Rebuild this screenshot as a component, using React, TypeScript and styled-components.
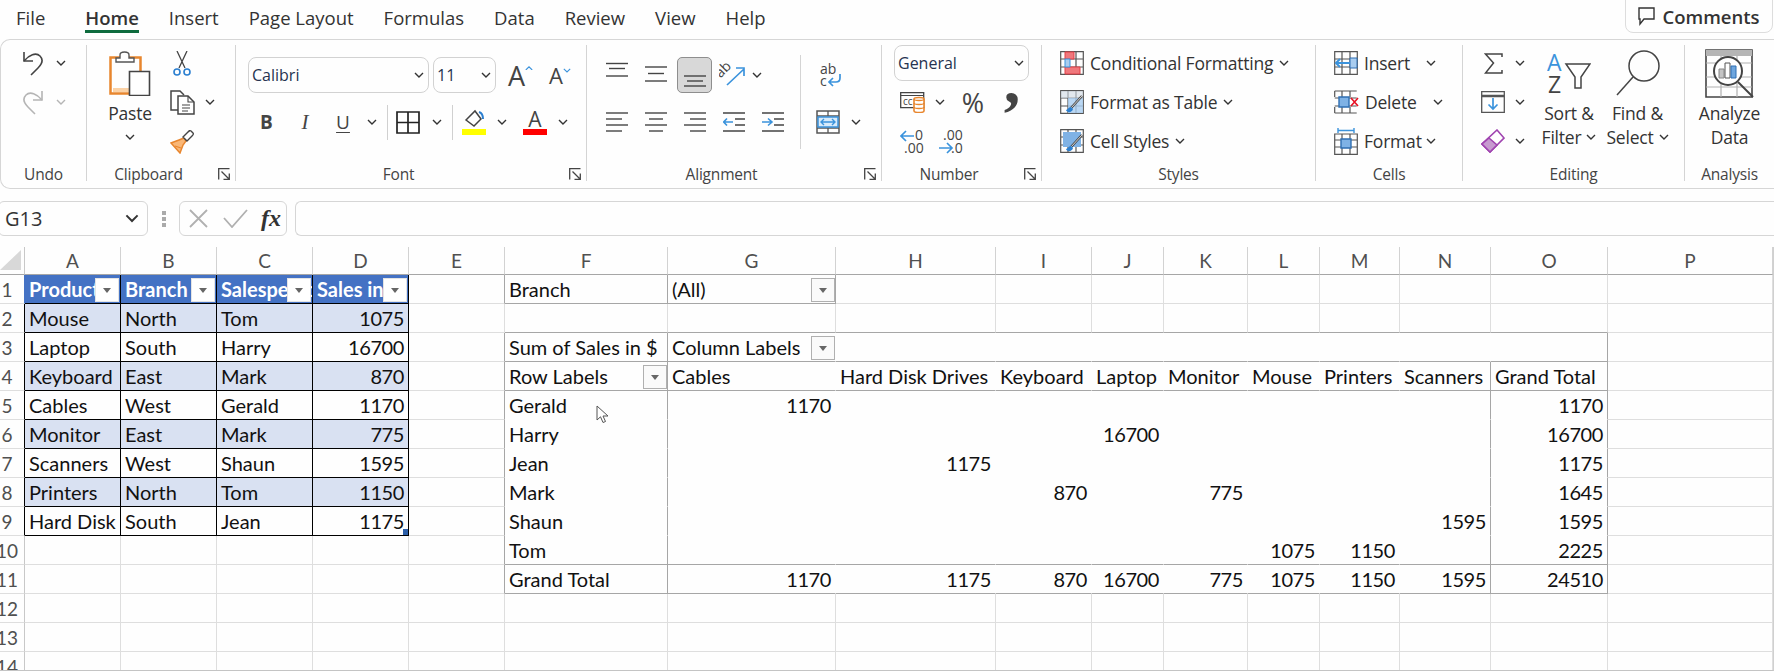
import React from "react";
import styled, { createGlobalStyle } from "styled-components";

const UI = `"Open Sans", "Noto Sans", sans-serif`;
const CELL = `Lato, "Open Sans", sans-serif`;
const INK = "#444";
const BLUE = "#3b93dc";
const ORANGE = "#e8862e";
const LINE = "#d6d6d6";
const GRID = "#dedede";
const GRAY = "#a6a6a6";

const GlobalStyle = createGlobalStyle`
  html, body { margin: 0; padding: 0; background: #fefefe; overflow: hidden; }
  * { box-sizing: border-box; }
`;

const Page = styled.div`
  width: 1774px;
  height: 671px;
  background: #fefefe;
  overflow: hidden;
  font-family: ${UI};
  color: #333;
`;

const TabBar = styled.div`
  display: flex;
  height: 39px;
  padding-left: 16px;
  gap: 30px;
  font-size: 18.5px;
`;

const Tab = styled.div<{ $active?: boolean; $after?: number }>`
  height: 33px;
  line-height: 36px;
  margin-right: ${(p) => p.$after ?? 0}px;
  color: #333;
  font-weight: ${(p) => (p.$active ? 600 : 400)};
  border-bottom: 3px solid ${(p) => (p.$active ? "#0e6b3e" : "transparent")};
`;

const CommentsButton = styled.div`
  margin-left: auto;
  margin-right: 1px;
  width: 148px;
  height: 34px;
  margin-top: -1px;
  display: flex;
  align-items: center;
  justify-content: center;
  gap: 7px;
  border: 1px solid #ddd;
  border-radius: 0 0 8px 8px;
  font-size: 18.5px;
  font-weight: 600;
`;

const Ribbon = styled.div`
  display: flex;
  height: 150px;
  border: 1px solid ${LINE};
  border-right: none;
  border-width: 1.5px 0 1.5px 1.5px;
  border-radius: 10px 0 0 10px;
`;

const Group = styled.section<{ $w: number; $last?: boolean }>`
  width: ${(p) => p.$w}px;
  flex: none;
  margin: 5px 0 7px;
  display: flex;
  flex-direction: column;
  border-right: ${(p) => (p.$last ? "none" : "1px solid #d4d4d4")};
`;

const Body = styled.div`
  flex: 1;
  display: flex;
  min-height: 0;
`;

const Foot = styled.div`
  height: 14px;
  display: flex;
  align-items: center;
  font-size: 15.5px;
  letter-spacing: -0.2px;
  color: #444;
`;

const FootLabel = styled.div<{ $launcher?: boolean }>`
  flex: 1;
  text-align: center;
  padding-right: ${(p) => (p.$launcher ? 8 : 0)}px;
`;

const Launcher = styled.svg`
  width: 12px;
  height: 12px;
  margin-right: 5px;
  flex: none;
`;

const Stack = styled.div<{ $top?: number; $gap?: number; $w?: number; $ml?: number }>`
  display: flex;
  flex-direction: column;
  padding-top: ${(p) => p.$top ?? 0}px;
  gap: ${(p) => p.$gap ?? 3}px;
  margin-left: ${(p) => p.$ml ?? 0}px;
  ${(p) => (p.$w ? `width: ${p.$w}px; flex: none;` : "")}
`;

const Row = styled.div<{ $pl?: number }>`
  display: flex;
  align-items: center;
  height: 36px;
  padding-left: ${(p) => p.$pl ?? 0}px;
`;

const Slot = styled.div<{ $w: number }>`
  width: ${(p) => p.$w}px;
  flex: none;
  height: 100%;
  display: flex;
  align-items: center;
  justify-content: center;
  & > * { flex: none; }
`;

const SelectedSlot = styled(Slot)`
  margin-left: 1px;
  background: #d8d8d8;
  border: 1px solid #8e8e8e;
  border-radius: 5px;
`;

const RowDivider = styled.div`
  width: 1px;
  height: 35px;
  background: #d0d0d0;
`;

const BodyDivider = styled.div`
  width: 1px;
  height: 94px;
  margin-top: 10px;
  background: #d4d4d4;
  flex: none;
`;

const Combo = styled.div<{ $w: number; $ml?: number }>`
  width: ${(p) => p.$w}px;
  height: 36px;
  margin-left: ${(p) => p.$ml ?? 0}px;
  flex: none;
  display: flex;
  align-items: center;
  justify-content: space-between;
  padding: 0 4px 0 3px;
  border: 1px solid #d2d2d2;
  border-radius: 8px;
  font-size: 16px;
  color: #263350;
`;

const RowText = styled.span<{ $w?: number }>`
  font-size: 17.5px;
  letter-spacing: -0.2px;
  white-space: nowrap;
  color: #333;
  ${(p) => (p.$w ? `width: ${p.$w}px; flex: none;` : "")}
`;

const IconGap = styled.div`
  width: 6px;
  flex: none;
`;

const ChevGap = styled.div`
  width: 6px;
  flex: none;
`;

const BigColumn = styled.div<{ $w: number; $ml?: number }>`
  width: ${(p) => p.$w}px;
  margin-left: ${(p) => p.$ml ?? 0}px;
  flex: none;
  display: flex;
  flex-direction: column;
  align-items: center;
`;

const BigIcon = styled.div`
  height: 56px;
  display: flex;
  align-items: center;
  justify-content: center;
`;

const BigText = styled.div`
  display: flex;
  align-items: center;
  gap: 5px;
  height: 24px;
  font-size: 17.5px;
  letter-spacing: -0.2px;
  color: #333;
  white-space: nowrap;
`;

const LetterBig = styled.span<{ $size: number }>`
  font-size: ${(p) => p.$size}px;
  line-height: 1;
  color: ${INK};
`;

const GrowWrap = styled.div`
  display: flex;
  align-items: flex-start;
  & > svg { margin-top: 4px; }
`;

const StyleLetter = styled.span<{ $bold?: boolean; $italic?: boolean; $underline?: boolean }>`
  font-family: ${(p) => (p.$italic ? `"Liberation Serif", serif` : UI)};
  font-size: ${(p) => (p.$italic ? 21 : 19)}px;
  font-weight: ${(p) => (p.$bold ? 700 : 400)};
  font-style: ${(p) => (p.$italic ? "italic" : "normal")};
  text-decoration: ${(p) => (p.$underline ? "underline" : "none")};
  text-underline-offset: 3px;
  color: ${INK};
`;

const ColorLetter = styled.div`
  display: flex;
  flex-direction: column;
  align-items: center;
  font-size: 21px;
  line-height: 19px;
  color: ${INK};
`;

const ColorBar = styled.div<{ $c: string }>`
  width: 24px;
  height: 6px;
  background: ${(p) => p.$c};
`;

const Percent = styled.span`
  font-size: 27px;
  line-height: 1;
  color: ${INK};
`;

const CommaMark = styled.span`
  font-family: "Liberation Serif", serif;
  font-weight: 700;
  font-size: 66px;
  line-height: 0;
  color: ${INK};
  transform: translateY(-21px);
`;

const FormulaBar = styled.div`
  display: flex;
  align-items: center;
  height: 35px;
  margin-top: 12px;
`;

const NameBox = styled.div`
  width: 150px;
  height: 35px;
  margin-left: -2px;
  padding: 0 8px 0 6px;
  display: flex;
  align-items: center;
  justify-content: space-between;
  border: 1px solid ${LINE};
  border-radius: 6px;
  font-size: 20px;
  color: #333;
`;

const Grip = styled.svg`
  width: 4px;
  height: 16px;
  margin: 0 13px 0 14px;
  flex: none;
`;

const FormulaButtons = styled.div`
  width: 108px;
  height: 35px;
  flex: none;
  padding-left: 9px;
  display: flex;
  align-items: center;
  gap: 15px;
  border: 1px solid ${LINE};
  border-radius: 6px;
`;

const FxMark = styled.span`
  font-family: "Liberation Serif", serif;
  font-style: italic;
  font-weight: 700;
  font-size: 24px;
  margin-left: -2px;
  color: #333;
`;

const FormulaInput = styled.div`
  flex: 1;
  height: 35px;
  margin-left: 8px;
  border: 1px solid ${LINE};
  border-right: none;
  border-radius: 6px 0 0 6px;
`;

const Sheet = styled.div`
  position: relative;
  height: 424px;
  margin-top: 11px;
  overflow: hidden;
  border-bottom: 1px solid #c4c4c4;
  border-right: 1px solid #d0d0d0;
`;

const SheetGrid = styled.div`
  display: grid;
  grid-template-columns: 25px 96px 96px 96px 96px 96px 163px 168px 160px 96px 72px 84px 72px 80px 91px 117px 1fr;
  grid-template-rows: 28px repeat(14, 29px);
  font-family: ${CELL};
  font-size: 20px;
  color: #111;
`;

const CornerCell = styled.div`
  display: flex;
  align-items: center;
  border-right: 1px solid #c8c8c8;
  border-bottom: 1px solid ${GRAY};
`;

const ColumnHead = styled.div`
  display: flex;
  align-items: center;
  justify-content: center;
  font-size: 19px;
  color: #505050;
  border-right: 1px solid #d2d2d2;
  border-bottom: 1px solid ${GRAY};
`;

const RowHead = styled.div<{ $edge: string }>`
  display: flex;
  align-items: center;
  justify-content: center;
  padding-right: 10px;
  overflow: hidden;
  font-size: 19px;
  color: #505050;
  border-right: 1px solid ${(p) => p.$edge};
  border-bottom: 1px solid ${GRID};
`;

const Cell = styled.div<{
  $right: string;
  $bottom: string;
  $num?: boolean;
  $bg?: string;
  $head?: boolean;
}>`
  position: relative;
  display: flex;
  align-items: center;
  justify-content: ${(p) => (p.$num ? "flex-end" : "flex-start")};
  padding: 0 4px;
  overflow: hidden;
  white-space: nowrap;
  letter-spacing: ${(p) => (p.$num ? "-0.4px" : "0")};
  background: ${(p) => p.$bg ?? "transparent"};
  color: ${(p) => (p.$head ? "#fff" : "#111")};
  font-weight: ${(p) => (p.$head ? 700 : 400)};
  border-right: 1px solid ${(p) => p.$right};
  border-bottom: 1px solid ${(p) => p.$bottom};
`;

const FilterButton = styled.div<{ $pivot?: boolean }>`
  position: absolute;
  right: ${(p) => (p.$pivot ? 0 : 1)}px;
  top: 3px;
  width: 24px;
  height: 24px;
  display: flex;
  align-items: center;
  justify-content: center;
  background: ${(p) => (p.$pivot ? "#fafafa" : "#fff")};
  border: 1px solid ${(p) => (p.$pivot ? "#b0b0b0" : "#e4e4e4")};
  &::after {
    content: "";
    border-left: 4.5px solid transparent;
    border-right: 4.5px solid transparent;
    border-top: 5px solid #666;
  }
`;

const ResizeCorner = styled.div`
  position: absolute;
  right: 0;
  bottom: 0;
  width: 5px;
  height: 6px;
  background: #2b5ea8;
`;

const MouseCursor = styled.svg`
  position: absolute;
  left: 596px;
  top: 158px;
  width: 13px;
  height: 19px;
`;

/* ---- icons ---- */

const Chev = ({ w = 10, gray = false, color, up = false }: { w?: number; gray?: boolean; color?: string; up?: boolean }) => (
  <svg width={w} height={w * 0.6} viewBox="0 0 10 6" fill="none">
    <path d={up ? "M1 5l4-4 4 4" : "M1 1l4 4 4-4"} stroke={color ?? (gray ? "#b5b5b5" : "#333")} strokeWidth="1.4" />
  </svg>
);

const UndoIcon = ({ flip = false, color = INK }: { flip?: boolean; color?: string }) => (
  <svg width="24" height="26" viewBox="0 0 24 26" fill="none" stroke={color} strokeWidth="1.6" transform={flip ? "scale(-1 1)" : undefined}>
    <path d="M3 2v9h9" />
    <path d="M3 11C8 5 15 2 19 6c4 4 1 9-2 12l-7 7" />
  </svg>
);

const PasteIcon = () => (
  <svg width="42" height="46" viewBox="0 0 42 46" fill="none">
    <path d="M1.500 7.500h30v36h-30z" stroke={ORANGE} strokeWidth="2.500" />
    <path d="M4 38h16v4H4z" fill="#fbd2a6" />
    <path d="M7 12V8h4V5c0-4 9-4 9 0v3h5v4z" fill="#fff" stroke="#555" strokeWidth="1.400" />
    <path d="M20.500 21.500h20v24h-20z" fill="#fff" stroke={INK} strokeWidth="1.600" />
  </svg>
);

const CutIcon = () => (
  <svg width="18" height="25" viewBox="0 0 18 25" fill="none">
    <path d="M4 0l8 17M14 0L6 17" stroke={INK} strokeWidth="1.300" />
    <circle cx="4" cy="21" r="3" stroke="#2b7fd0" strokeWidth="1.600" />
    <circle cx="14" cy="21" r="3" stroke="#2b7fd0" strokeWidth="1.600" />
  </svg>
);

const CopyIcon = () => (
  <svg width="25" height="25" viewBox="0 0 25 25" fill="none" stroke={INK} strokeWidth="1.500">
    <path d="M8 20H1V1h9l4 4" />
    <path d="M8 6h10l6 6v12H8z" fill="#fff" />
    <path d="M18 6v6h6M12 15h8M12 18h8M12 21h6" strokeWidth="1.100" />
  </svg>
);

const PainterIcon = () => (
  <svg width="25" height="25" viewBox="0 0 25 25" fill="none">
    <path d="M14 9l-5 2-8 3 9 10 3-8 3-4z" fill="#f9b777" stroke={ORANGE} strokeWidth="1.500" />
    <path d="M5 17l6 2" stroke={ORANGE} strokeWidth="1.200" />
    <path d="M13 8l5-5c1-1 2-2 3-1l2 2c1 1 0 2-1 3l-5 5z" fill="#fff" stroke={INK} strokeWidth="1.400" />
  </svg>
);

const LauncherIcon = () => (
  <Launcher viewBox="0 0 12 12" fill="none" stroke={INK} strokeWidth="1.300">
    <path d="M.7 11.500V.7h10.800" />
    <path d="M3.500 3.500l7.500 7.500M11.300 5.500v6H5.500" />
  </Launcher>
);

const BordersIcon = () => (
  <svg width="24" height="23" viewBox="0 0 24 23" fill="none" stroke="#222" strokeWidth="1.700">
    <path d="M1 1h22v21H1zM12 1v21M1 11.500h22" />
  </svg>
);

const FillIcon = () => (
  <svg width="24" height="26" viewBox="0 0 24 26" fill="none">
    <path d="M4 11l9-9 6 8-7 7z" stroke={INK} strokeWidth="1.500" fill="#fff" />
    <path d="M17 3c3 1 4 4 4 7" stroke="#2b7fd0" strokeWidth="2" />
    <path d="M0 20h24v6H0z" fill="#ffff00" />
  </svg>
);

const Lines = ({ rows, h = 20 }: { rows: [number, number, number][]; h?: number }) => (
  <svg width="22" height={h} viewBox={`0 0 22 ${h}`} fill="none" stroke={INK} strokeWidth="1.400">
    {rows.map(([y, a, b]) => (
      <path key={y} d={`M${a} ${y}H${b}`} />
    ))}
  </svg>
);

const OrientationIcon = () => (
  <svg width="26" height="26" viewBox="0 0 26 26" fill="none">
    <text x="1.500" y="16.500" transform="rotate(-45 1.500 16.500)" fontFamily={UI} fontSize="14" fill={INK}>ab</text>
    <path d="M8 23L25 7M17 6h8v8" stroke={BLUE} strokeWidth="1.700" />
  </svg>
);

const IndentIcon = ({ inward = false }: { inward?: boolean }) => (
  <svg width="22" height="22" viewBox="0 0 22 22" fill="none">
    <path d="M0 2h22M12 8h10M12 14h10M0 20h22" stroke={INK} strokeWidth="1.300" />
    {inward ? (
      <path d="M0 11h9M6 7.500l4 3.500-4 3.500" stroke={BLUE} strokeWidth="1.600" />
    ) : (
      <path d="M10 11H1M4 7.500L.7 11 4 14.500" stroke={BLUE} strokeWidth="1.600" />
    )}
  </svg>
);

const WrapIcon = () => (
  <svg width="23" height="25" viewBox="0 0 23 25" fill="none">
    <text x="1" y="11" fontFamily={UI} fontSize="14" fill={INK}>ab</text>
    <text x="1" y="23" fontFamily={UI} fontSize="14" fill={INK}>c</text>
    <path d="M21 11v4c0 3-2 4-4 4H10M14 15l-4 4 4 4" stroke={BLUE} strokeWidth="1.700" />
  </svg>
);

const MergeIcon = () => (
  <svg width="24" height="24" viewBox="0 0 24 24" fill="none">
    <path d="M1 1h22v22H1z" stroke="#555" strokeWidth="1.500" />
    <path d="M1 6h22M1 18h22M12 1v5M12 18v5" stroke="#555" strokeWidth="1.300" />
    <path d="M2 7h20v10H2z" fill="#d8ebfb" stroke={BLUE} strokeWidth="1.500" />
    <path d="M5 12h14M8 9l-3 3 3 3M16 9l3 3-3 3" stroke={BLUE} strokeWidth="1.400" />
  </svg>
);

const CurrencyIcon = () => (
  <svg width="25" height="21" viewBox="0 0 25 21" fill="none">
    <path d="M.7.700h23v15H.7z" stroke={INK} strokeWidth="1.300" />
    <path d="M.7 3.500h23" stroke={INK} />
    <text x="3" y="13" fontFamily={UI} fontSize="10" fill={INK}>cc</text>
    <path d="M14 7c0-2 10-2 10 0v12c0 2-10 2-10 0z" fill="#fff" stroke={ORANGE} strokeWidth="1.600" />
    <path d="M14 7c0 2 10 2 10 0M14 11c0 2 10 2 10 0M14 15c0 2 10 2 10 0" stroke={ORANGE} strokeWidth="1.300" />
  </svg>
);

const DecimalUpIcon = () => (
  <svg width="24" height="25" viewBox="0 0 24 25" fill="none">
    <path d="M1 7h13M6 2L1 7l5 5" stroke={BLUE} strokeWidth="1.700" />
    <text x="15" y="11" fontFamily={UI} fontSize="14" fill={INK}>0</text>
    <text x="4" y="24" fontFamily={UI} fontSize="14" fill={INK}>.00</text>
  </svg>
);

const DecimalDownIcon = () => (
  <svg width="24" height="25" viewBox="0 0 24 25" fill="none">
    <text x="4" y="11" fontFamily={UI} fontSize="14" fill={INK}>.00</text>
    <path d="M0 19h13M8 14l5 5-5 5" stroke={BLUE} strokeWidth="1.700" />
    <text x="12" y="24" fontFamily={UI} fontSize="14" fill={INK}>.0</text>
  </svg>
);

const TableBase = ({ children }: { children?: React.ReactNode }) => (
  <svg width="24" height="24" viewBox="0 0 24 24" fill="none">
    <path d="M.7.700h22.600v22.600H.7zM8 .7v22.600M16 .7v22.600M.7 8h22.600M.7 16h22.600" stroke="#555" strokeWidth="1.200" />
    {children}
  </svg>
);

const ConditionalIcon = () => (
  <TableBase>
    <path d="M5 1h9v7H5z" fill="#f0787c" stroke="#e04048" />
    <path d="M5 16h15v7H5z" fill="#f0787c" stroke="#e04048" />
    <path d="M5 8h5v8H5z" fill="#a9cdf0" stroke={BLUE} />
  </TableBase>
);

const BrushOverlay = () => (
  <>
    <path d="M22 6L11 18" stroke={INK} strokeWidth="2.400" />
    <path d="M22 6L11 18" stroke="#fff" strokeWidth=".8" />
    <path d="M11 17c-3 0-3 3-5 3 1 3 6 3 7-1z" fill="#2b7fd0" />
  </>
);

const FormatTableIcon = () => (
  <TableBase>
    <path d="M8 8h15v15H8z" fill="#a9cdf0" opacity=".8" />
    <path d="M1 1h22v7H1z" fill="#cfd8e3" opacity=".6" />
    <BrushOverlay />
  </TableBase>
);

const CellStylesIcon = () => (
  <TableBase>
    <path d="M3 3h18v15H3z" fill="#7fb2e5" />
    <BrushOverlay />
  </TableBase>
);

const InsertCellsIcon = () => (
  <TableBase>
    <path d="M16 7h7v10h-7z" fill="#a9cdf0" stroke="#2f6fb3" />
    <path d="M16 12H2M6 8l-4 4 4 4" stroke={BLUE} strokeWidth="2" />
  </TableBase>
);

const DeleteCellsIcon = () => (
  <svg width="25" height="24" viewBox="0 0 25 24" fill="none">
    <path d="M.7 1h22M.7 8h22M.7 16h22M.7 23h22M8 1v6M16 1v6M8 17v6M16 17v6M.7 1v6M.7 17v6" stroke="#555" strokeWidth="1.200" />
    <path d="M5 7h10v10H5z" fill="#7fb2e5" stroke="#2f6fb3" strokeWidth="1.400" />
    <path d="M17 8l7 8M24 8l-7 8" stroke="#e81123" strokeWidth="1.600" />
  </svg>
);

const FormatCellsIcon = () => (
  <svg width="24" height="27" viewBox="0 0 24 27" fill="none">
    <path d="M4 2.500h16M4 0v5M20 0v5" stroke={BLUE} strokeWidth="1.400" />
    <path d="M.7 6h22.600v20.300H.7zM8 6v20M16 6v20M.7 12h22.600M.7 19h22.600" stroke="#555" strokeWidth="1.200" />
    <path d="M7 11h10v9H7z" fill="#7fb2e5" stroke="#2f6fb3" strokeWidth="1.400" />
  </svg>
);

const SumIcon = () => (
  <svg width="19" height="21" viewBox="0 0 19 21" fill="none" stroke={INK} strokeWidth="1.500">
    <path d="M18 4V1H1.500l8 9-8 10H18v-3" />
  </svg>
);

const FillDownIcon = () => (
  <svg width="24" height="22" viewBox="0 0 24 22" fill="none">
    <path d="M.7.700h22.600v20.600H.7z" stroke="#555" strokeWidth="1.300" />
    <path d="M.7 5h22.600" stroke="#555" strokeWidth="2.500" />
    <path d="M12 7v11M7.500 13.500L12 18l4.500-4.500" stroke={BLUE} strokeWidth="1.700" />
  </svg>
);

const EraserIcon = () => (
  <svg width="24" height="24" viewBox="0 0 24 24" fill="none">
    <path d="M16 1l7 8-14 14-8-8z" fill="#fff" stroke="#a044b0" strokeWidth="1.600" />
    <path d="M8 9l8 7-7 7-8-8z" fill="#c79ad0" stroke="#a044b0" strokeWidth="1.600" />
  </svg>
);

const SortFilterIcon = () => (
  <svg width="44" height="42" viewBox="0 0 44 42" fill="none">
    <text x="0" y="19" fontFamily={UI} fontSize="23" fill={BLUE}>A</text>
    <text x="1" y="41" fontFamily={UI} fontSize="23" fill={INK}>Z</text>
    <path d="M19 12h24l-9 13v11h-6V25z" fill="#fff" stroke={INK} strokeWidth="1.500" />
  </svg>
);

const FindIcon = () => (
  <svg width="44" height="46" viewBox="0 0 44 46" fill="none" stroke={INK} strokeWidth="1.500">
    <circle cx="28" cy="16" r="15" />
    <path d="M17 27L1 45" />
  </svg>
);

const AnalyzeIcon = () => (
  <svg width="49" height="49" viewBox="0 0 49 49" fill="none">
    <path d="M1 1h46v47H1z" stroke={INK} strokeWidth="1.600" />
    <path d="M1 1h46v6H1z" fill="#b5b5b5" />
    <path d="M1 14h46M1 28h46M1 38h46M16 7v41M32 7v41" stroke="#b0b0b0" strokeWidth="1.200" />
    <circle cx="23" cy="22" r="14" fill="#fff" stroke={INK} strokeWidth="2" />
    <path d="M14 20h5v9h-5z" fill="#c4c4c4" stroke="#888" />
    <path d="M20 14h5v15h-5z" fill="#fff" stroke="#555" />
    <path d="M26 17h5v12h-5z" fill="#6ea6de" stroke="#2f6fb3" />
    <path d="M33 33l15 15" stroke={INK} strokeWidth="2" />
  </svg>
);

const BubbleIcon = () => (
  <svg width="17" height="19" viewBox="0 0 17 19" fill="none" stroke="#333" strokeWidth="1.400">
    <path d="M1 1h15v11H6l-4 5v-5H1z" />
  </svg>
);

const CrossIcon = () => (
  <svg width="19" height="19" viewBox="0 0 19 19" fill="none" stroke="#b0b0b0" strokeWidth="1.800">
    <path d="M1 1l17 17M18 1L1 18" />
  </svg>
);

const CheckIcon = () => (
  <svg width="25" height="19" viewBox="0 0 25 19" fill="none" stroke="#b0b0b0" strokeWidth="1.800">
    <path d="M1 9l8 9L24 1" />
  </svg>
);

/* ---- sheet data ---- */

const COLUMNS = "ABCDEFGHIJKLMNOP".split("");

const TABLE: string[][] = [
  ["Product", "Branch", "Salesperson", "Sales in $"],
  ["Mouse", "North", "Tom", "1075"],
  ["Laptop", "South", "Harry", "16700"],
  ["Keyboard", "East", "Mark", "870"],
  ["Cables", "West", "Gerald", "1170"],
  ["Monitor", "East", "Mark", "775"],
  ["Scanners", "West", "Shaun", "1595"],
  ["Printers", "North", "Tom", "1150"],
  ["Hard Disk Drives", "South", "Jean", "1175"],
];

// row number -> column letter -> text
const PIVOT: Record<number, Record<string, string>> = {
  1: { F: "Branch", G: "(All)" },
  3: { F: "Sum of Sales in $", G: "Column Labels" },
  4: {
    F: "Row Labels", G: "Cables", H: "Hard Disk Drives", I: "Keyboard", J: "Laptop",
    K: "Monitor", L: "Mouse", M: "Printers", N: "Scanners", O: "Grand Total",
  },
  5: { F: "Gerald", G: "1170", O: "1170" },
  6: { F: "Harry", J: "16700", O: "16700" },
  7: { F: "Jean", H: "1175", O: "1175" },
  8: { F: "Mark", I: "870", K: "775", O: "1645" },
  9: { F: "Shaun", N: "1595", O: "1595" },
  10: { F: "Tom", L: "1075", M: "1150", O: "2225" },
  11: {
    F: "Grand Total", G: "1170", H: "1175", I: "870", J: "16700", K: "775",
    L: "1075", M: "1150", N: "1595", O: "24510",
  },
};

const PIVOT_BUTTONS = ["G1", "G3", "F4"];

const isPivotCol = (c: number) => c >= 5 && c <= 14;

const rightEdge = (r: number, c: number) => {
  if (c <= 3 && r <= 9) return "#000";
  if (c === 4 && (r === 1 || (r >= 3 && r <= 11))) return GRAY;
  if (r === 1 && (c === 5 || c === 6)) return GRAY;
  if (r >= 3 && r <= 11 && isPivotCol(c)) {
    if (c === 5 || c === 14) return GRAY;
    if (c === 13 && r >= 4) return GRAY;
    return "transparent";
  }
  return GRID;
};

const bottomEdge = (r: number, c: number) => {
  if (c <= 3 && r <= 9) return "#000";
  if (r === 1 && (c === 5 || c === 6)) return GRAY;
  if (r === 2 && isPivotCol(c)) return GRAY;
  if (r >= 3 && r <= 11 && isPivotCol(c)) {
    return r === 3 || r === 4 || r === 10 || r === 11 ? GRAY : "transparent";
  }
  return GRID;
};

const renderCell = (r: number, c: number) => {
  const col = COLUMNS[c];
  const inTable = c <= 3 && r <= 9;
  const text = inTable ? TABLE[r - 1][c] : PIVOT[r]?.[col] ?? "";
  const isNum = /^\d+$/.test(text);
  let bg: string | undefined;
  if (inTable && r === 1) bg = "#4472c4";
  else if (inTable && r % 2 === 0) bg = "#d9e1f2";
  return (
    <Cell key={`${col}${r}`} $right={rightEdge(r, c)} $bottom={bottomEdge(r, c)} $num={isNum} $bg={bg} $head={inTable && r === 1}>
      {text}
      {inTable && r === 1 && <FilterButton />}
      {PIVOT_BUTTONS.includes(`${col}${r}`) && <FilterButton $pivot />}
      {col === "D" && r === 9 && <ResizeCorner />}
    </Cell>
  );
};

const rowEdge = (r: number) => {
  if (r === 1) return "#4472c4";
  return r <= 9 ? "#000" : "#c8c8c8";
};

const TABS = ["Insert", "Page Layout", "Formulas", "Data", "Review", "View", "Help"];

export default function App() {
  return (
    <Page>
      <GlobalStyle />
      <TabBar>
        <Tab $after={10}>File</Tab>
        <Tab $active>Home</Tab>
        {TABS.map((t) => (
          <Tab key={t}>{t}</Tab>
        ))}
        <CommentsButton>
          <BubbleIcon />
          Comments
        </CommentsButton>
      </TabBar>

      <Ribbon>
        <Group $w={86}>
          <Body>
            <Stack>
              <Row $pl={17}>
                <Slot $w={30}><UndoIcon /></Slot>
                <Slot $w={26}><Chev /></Slot>
              </Row>
              <Row $pl={17}>
                <Slot $w={30}><UndoIcon flip color="#b5b5b5" /></Slot>
                <Slot $w={26}><Chev gray /></Slot>
              </Row>
            </Stack>
          </Body>
          <Foot><FootLabel>Undo</FootLabel></Foot>
        </Group>

        <Group $w={149}>
          <Body>
            <BigColumn $w={52} $ml={17}>
              <BigIcon><PasteIcon /></BigIcon>
              <BigText>Paste</BigText>
              <BigText><Chev /></BigText>
            </BigColumn>
            <Stack $w={30} $ml={11}>
              <Row><Slot $w={30}><CutIcon /></Slot></Row>
              <Row><Slot $w={30}><CopyIcon /></Slot></Row>
              <Row><Slot $w={30}><PainterIcon /></Slot></Row>
            </Stack>
            <Stack>
              <Row />
              <Row><Slot $w={26}><Chev /></Slot></Row>
            </Stack>
          </Body>
          <Foot><FootLabel $launcher>Clipboard</FootLabel><LauncherIcon /></Foot>
        </Group>

        <Group $w={351}>
          <Body>
            <Stack $top={12} $gap={11}>
              <Row $pl={12}>
                <Combo $w={181}>Calibri<Chev /></Combo>
                <Combo $w={63} $ml={4}>11<Chev /></Combo>
                <Slot $w={49}>
                  <GrowWrap><LetterBig $size={27}>A</LetterBig><Chev w={8} up color={BLUE} /></GrowWrap>
                </Slot>
                <Slot $w={30}>
                  <GrowWrap><LetterBig $size={22}>A</LetterBig><Chev w={8} color={BLUE} /></GrowWrap>
                </Slot>
              </Row>
              <Row $pl={12}>
                <Slot $w={37}><StyleLetter $bold>B</StyleLetter></Slot>
                <Slot $w={40}><StyleLetter $italic>I</StyleLetter></Slot>
                <Slot $w={36}><StyleLetter $underline>U</StyleLetter></Slot>
                <Slot $w={22}><Chev /></Slot>
                <Slot $w={8}><RowDivider /></Slot>
                <Slot $w={34}><BordersIcon /></Slot>
                <Slot $w={24}><Chev /></Slot>
                <Slot $w={6}><RowDivider /></Slot>
                <Slot $w={38}><FillIcon /></Slot>
                <Slot $w={18}><Chev /></Slot>
                <Slot $w={48}>
                  <ColorLetter>A<ColorBar $c="#ff0000" /></ColorLetter>
                </Slot>
                <Slot $w={8}><Chev /></Slot>
              </Row>
            </Stack>
          </Body>
          <Foot><FootLabel $launcher>Font</FootLabel><LauncherIcon /></Foot>
        </Group>

        <Group $w={295}>
          <Body>
            <Stack $top={12} $gap={11} $w={213}>
              <Row $pl={11}>
                <Slot $w={38}><Lines h={36} rows={[[6.5, 0, 22], [11.5, 3, 19], [19, 0, 22]]} /></Slot>
                <Slot $w={40}><Lines h={36} rows={[[10, 0, 22], [16.5, 3, 19], [24, 0, 22]]} /></Slot>
                <SelectedSlot $w={35}><Lines h={34} rows={[[18, 0, 22], [23, 3, 19], [28, 0, 22]]} /></SelectedSlot>
                <Slot $w={40}><OrientationIcon /></Slot>
                <Slot $w={10}><Chev /></Slot>
              </Row>
              <Row $pl={11}>
                <Slot $w={38}><Lines rows={[[1, 0, 22], [7, 0, 16], [13, 0, 22], [19, 0, 16]]} /></Slot>
                <Slot $w={40}><Lines rows={[[1, 0, 22], [7, 4, 18], [13, 0, 22], [19, 4, 18]]} /></Slot>
                <Slot $w={38}><Lines rows={[[1, 0, 22], [7, 6, 22], [13, 0, 22], [19, 6, 22]]} /></Slot>
                <Slot $w={40}><IndentIcon /></Slot>
                <Slot $w={38}><IndentIcon inward /></Slot>
              </Row>
            </Stack>
            <BodyDivider />
            <Stack $top={12} $gap={11}>
              <Row><Slot $w={58}><WrapIcon /></Slot></Row>
              <Row $pl={10}>
                <Slot $w={34}><MergeIcon /></Slot>
                <Slot $w={22}><Chev /></Slot>
              </Row>
            </Stack>
          </Body>
          <Foot><FootLabel $launcher>Alignment</FootLabel><LauncherIcon /></Foot>
        </Group>

        <Group $w={160}>
          <Body>
            <Stack>
              <Row $pl={12}><Combo $w={135}>General<Chev /></Combo></Row>
              <Row $pl={14}>
                <Slot $w={32}><CurrencyIcon /></Slot>
                <Slot $w={24}><Chev /></Slot>
                <Slot $w={42}><Percent>%</Percent></Slot>
                <Slot $w={36}><CommaMark>,</CommaMark></Slot>
              </Row>
              <Row $pl={14}>
                <Slot $w={32}><DecimalUpIcon /></Slot>
                <Slot $w={45}><DecimalDownIcon /></Slot>
              </Row>
            </Stack>
          </Body>
          <Foot><FootLabel $launcher>Number</FootLabel><LauncherIcon /></Foot>
        </Group>

        <Group $w={274}>
          <Body>
            <Stack>
              <Row $pl={18}><ConditionalIcon /><IconGap /><RowText>Conditional Formatting</RowText><ChevGap /><Chev /></Row>
              <Row $pl={18}><FormatTableIcon /><IconGap /><RowText>Format as Table</RowText><ChevGap /><Chev /></Row>
              <Row $pl={18}><CellStylesIcon /><IconGap /><RowText>Cell Styles</RowText><ChevGap /><Chev /></Row>
            </Stack>
          </Body>
          <Foot><FootLabel>Styles</FootLabel></Foot>
        </Group>

        <Group $w={147}>
          <Body>
            <Stack>
              <Row $pl={18}><InsertCellsIcon /><IconGap /><RowText $w={60}>Insert</RowText><Slot $w={14}><Chev /></Slot></Row>
              <Row $pl={18}><DeleteCellsIcon /><IconGap /><RowText $w={66}>Delete</RowText><Slot $w={14}><Chev /></Slot></Row>
              <Row $pl={18}><FormatCellsIcon /><IconGap /><RowText $w={60}>Format</RowText><Slot $w={14}><Chev /></Slot></Row>
            </Stack>
          </Body>
          <Foot><FootLabel>Cells</FootLabel></Foot>
        </Group>

        <Group $w={222}>
          <Body>
            <Stack>
              <Row $pl={15}><Slot $w={30}><SumIcon /></Slot><Slot $w={24}><Chev /></Slot></Row>
              <Row $pl={15}><Slot $w={30}><FillDownIcon /></Slot><Slot $w={24}><Chev /></Slot></Row>
              <Row $pl={15}><Slot $w={30}><EraserIcon /></Slot><Slot $w={24}><Chev /></Slot></Row>
            </Stack>
            <BigColumn $w={70} $ml={2}>
              <BigIcon><SortFilterIcon /></BigIcon>
              <BigText>Sort &amp;</BigText>
              <BigText>Filter<Chev /></BigText>
            </BigColumn>
            <BigColumn $w={67}>
              <BigIcon><FindIcon /></BigIcon>
              <BigText>Find &amp;</BigText>
              <BigText>Select<Chev /></BigText>
            </BigColumn>
          </Body>
          <Foot><FootLabel>Editing</FootLabel></Foot>
        </Group>

        <Group $w={89} $last>
          <Body>
            <BigColumn $w={89}>
              <BigIcon><AnalyzeIcon /></BigIcon>
              <BigText>Analyze</BigText>
              <BigText>Data</BigText>
            </BigColumn>
          </Body>
          <Foot><FootLabel>Analysis</FootLabel></Foot>
        </Group>
      </Ribbon>

      <FormulaBar>
        <NameBox>G13<Chev w={14} /></NameBox>
        <Grip viewBox="0 0 4 16" fill="#aaa">
          <path d="M0 0h4v4H0zM0 6h4v4H0zM0 12h4v4H0z" />
        </Grip>
        <FormulaButtons>
          <CrossIcon />
          <CheckIcon />
          <FxMark>fx</FxMark>
        </FormulaButtons>
        <FormulaInput />
      </FormulaBar>

      <Sheet>
        <SheetGrid>
          <CornerCell>
            <svg width="22" height="21" viewBox="0 0 22 21"><path d="M21 0v20H0z" fill="#d8d8d8" /></svg>
          </CornerCell>
          {COLUMNS.map((c) => (
            <ColumnHead key={c}>{c}</ColumnHead>
          ))}
          {Array.from({ length: 14 }, (_, i) => i + 1).map((r) => (
            <React.Fragment key={r}>
              <RowHead $edge={rowEdge(r)}>{r}</RowHead>
              {COLUMNS.map((_, c) => renderCell(r, c))}
            </React.Fragment>
          ))}
        </SheetGrid>
        <MouseCursor viewBox="0 0 13 19" fill="#fff" stroke="#555" strokeWidth="1">
          <path d="M1 1v14l3.500-3.200L7 17.500l2.500-1-2.500-5.500h5z" />
        </MouseCursor>
      </Sheet>
    </Page>
  );
}
